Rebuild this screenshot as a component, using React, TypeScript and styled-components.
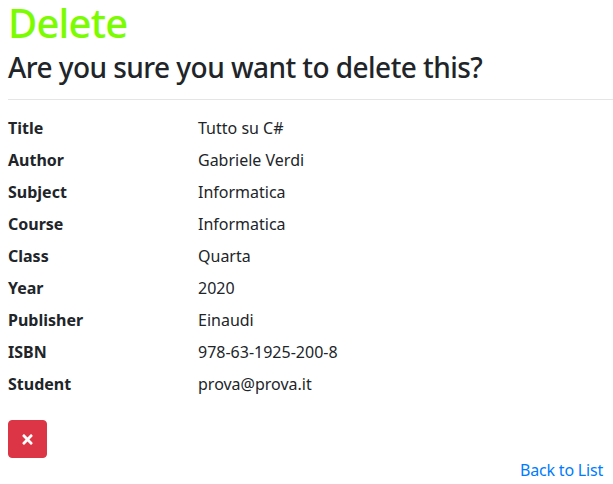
import React from "react";
import styled, { createGlobalStyle } from "styled-components";
import { FaTimes } from "react-icons/fa";

const Global = createGlobalStyle`
  html, body { margin: 0; padding: 0; background: #fff; }
  body {
    font-family: "Noto Sans", "Open Sans", sans-serif;
    font-size: 16px;
    line-height: 1.5;
    color: #212529;
  }
`;

const Page = styled.div`
  padding: 0 10px 0 8px;
  display: flex;
  flex-direction: column;
`;

const Title = styled.h1`
  margin: 0;
  font-size: 40px;
  font-weight: 500;
  line-height: 46px;
  letter-spacing: -0.8px;
  color: #7cfc00;
`;

const Subtitle = styled.h3`
  margin: 4px 0 0;
  font-size: 28px;
  font-weight: 500;
  line-height: 34px;
  letter-spacing: -0.55px;
  color: #212529;
`;

const Rule = styled.hr`
  margin: 15px -10px 16px 0;
  border: 0;
  border-top: 1px solid rgba(0, 0, 0, 0.1);
`;

const Details = styled.dl`
  margin: 0;
  display: grid;
  grid-template-columns: 190px 1fr;
  row-gap: 8px;
`;

const Term = styled.dt`
  font-weight: 700;
  margin: 0;
`;

const Desc = styled.dd`
  margin: 0;
`;

const Actions = styled.div`
  margin-top: 24px;
  display: flex;
  flex-direction: column;
`;

const DeleteButton = styled.button`
  width: 39px;
  height: 38px;
  padding: 0;
  border: 1px solid #dc3545;
  border-radius: 4px;
  background: #dc3545;
  color: #fff;
  display: flex;
  align-items: center;
  justify-content: center;
  cursor: pointer;
`;

const BackLink = styled.a`
  align-self: flex-end;
  color: #007bff;
  text-decoration: none;
  line-height: 24px;
  letter-spacing: -0.2px;
`;

const rows: [string, string][] = [
  ["Title", "Tutto su C#"],
  ["Author", "Gabriele Verdi"],
  ["Subject", "Informatica"],
  ["Course", "Informatica"],
  ["Class", "Quarta"],
  ["Year", "2020"],
  ["Publisher", "Einaudi"],
  ["ISBN", "978-63-1925-200-8"],
  ["Student", "prova@prova.it"],
];

export default function App() {
  return (
    <>
      <Global />
      <Page>
        <Title>Delete</Title>
        <Subtitle>Are you sure you want to delete this?</Subtitle>
        <Rule />
        <Details>
          {rows.map(([k, v]) => (
            <React.Fragment key={k}>
              <Term>{k}</Term>
              <Desc>{v}</Desc>
            </React.Fragment>
          ))}
        </Details>
        <Actions>
          <DeleteButton type="submit" aria-label="Delete">
            <FaTimes size={15} />
          </DeleteButton>
          <BackLink href="#">Back to List</BackLink>
        </Actions>
      </Page>
    </>
  );
}
